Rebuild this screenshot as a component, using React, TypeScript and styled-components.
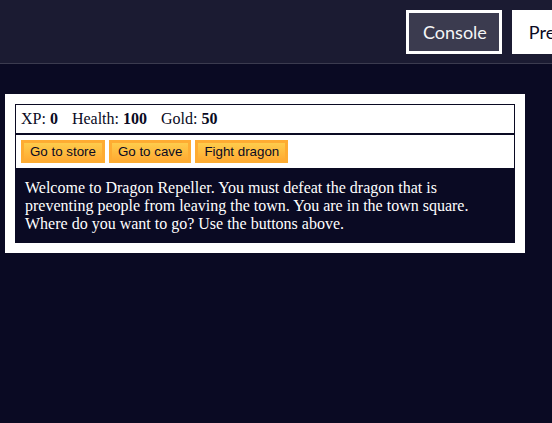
import React from "react";
import styled, { createGlobalStyle } from "styled-components";

const GlobalStyle = createGlobalStyle`
  html, body {
    margin: 0;
    padding: 0;
    background-color: #0a0a23;
  }
  body {
    overflow: hidden;
    font-family: "Liberation Serif", "Times New Roman", serif;
  }
`;

const Page = styled.div`
  width: 552px;
  height: 423px;
  background-color: #0a0a23;
  overflow: hidden;
`;

const Header = styled.header`
  height: 63px;
  border-bottom: 1px solid #3b3b4f;
  background-color: #1b1b32;
  display: flex;
  align-items: center;
  gap: 10px;
  padding-left: 406px;
  overflow: hidden;
  white-space: nowrap;
`;

const TabButton = styled.button<{ $active?: boolean }>`
  flex: none;
  height: 44px;
  padding: 0 12px 0 14px;
  border: 3px solid #ffffff;
  background-color: ${(p) => (p.$active ? "#3b3b4f" : "#ffffff")};
  color: ${(p) => (p.$active ? "#f5f6f7" : "#0a0a23")};
  font-family: Lato, "Open Sans", sans-serif;
  font-size: 18px;
  cursor: pointer;
`;

const Game = styled.div`
  width: 500px;
  margin: 30px 0 0 5px;
  padding: 10px;
  background-color: #ffffff;
  color: #ffffff;
`;

const Stats = styled.div`
  border: 1px solid #0a0a23;
  padding: 5px;
  color: #0a0a23;
  font-size: 16px;
  line-height: normal;
`;

const Stat = styled.span`
  padding-right: 10px;
`;

const Controls = styled.div`
  border: 1px solid #0a0a23;
  padding: 5px;
  display: flex;
  gap: 4px;
`;

const GameButton = styled.button`
  cursor: pointer;
  color: #0a0a23;
  background-color: #feac32;
  background-image: linear-gradient(#fecc4c, #ffac33);
  border: 3px solid #feac32;
  padding: 1px 6px;
  font-family: "Liberation Sans", Arial, sans-serif;
  font-size: 13.333px;
  line-height: normal;
`;

const Text = styled.div`
  background-color: #0a0a23;
  color: #ffffff;
  padding: 10px;
  font-size: 16px;
  line-height: normal;
`;

export default function App() {
  return (
    <Page>
      <GlobalStyle />
      <Header>
        <TabButton $active>Console</TabButton>
        <TabButton>Preview</TabButton>
      </Header>
      <Game>
        <Stats>
          <Stat>
            XP: <strong>0</strong>
          </Stat>{" "}
          <Stat>
            Health: <strong>100</strong>
          </Stat>{" "}
          <Stat>
            Gold: <strong>50</strong>
          </Stat>
        </Stats>
        <Controls>
          <GameButton>Go to store</GameButton>
          <GameButton>Go to cave</GameButton>
          <GameButton>Fight dragon</GameButton>
        </Controls>
        <Text>
          Welcome to Dragon Repeller. You must defeat the dragon that is
          preventing people from leaving the town. You are in the town square.
          Where do you want to go? Use the buttons above.
        </Text>
      </Game>
    </Page>
  );
}
